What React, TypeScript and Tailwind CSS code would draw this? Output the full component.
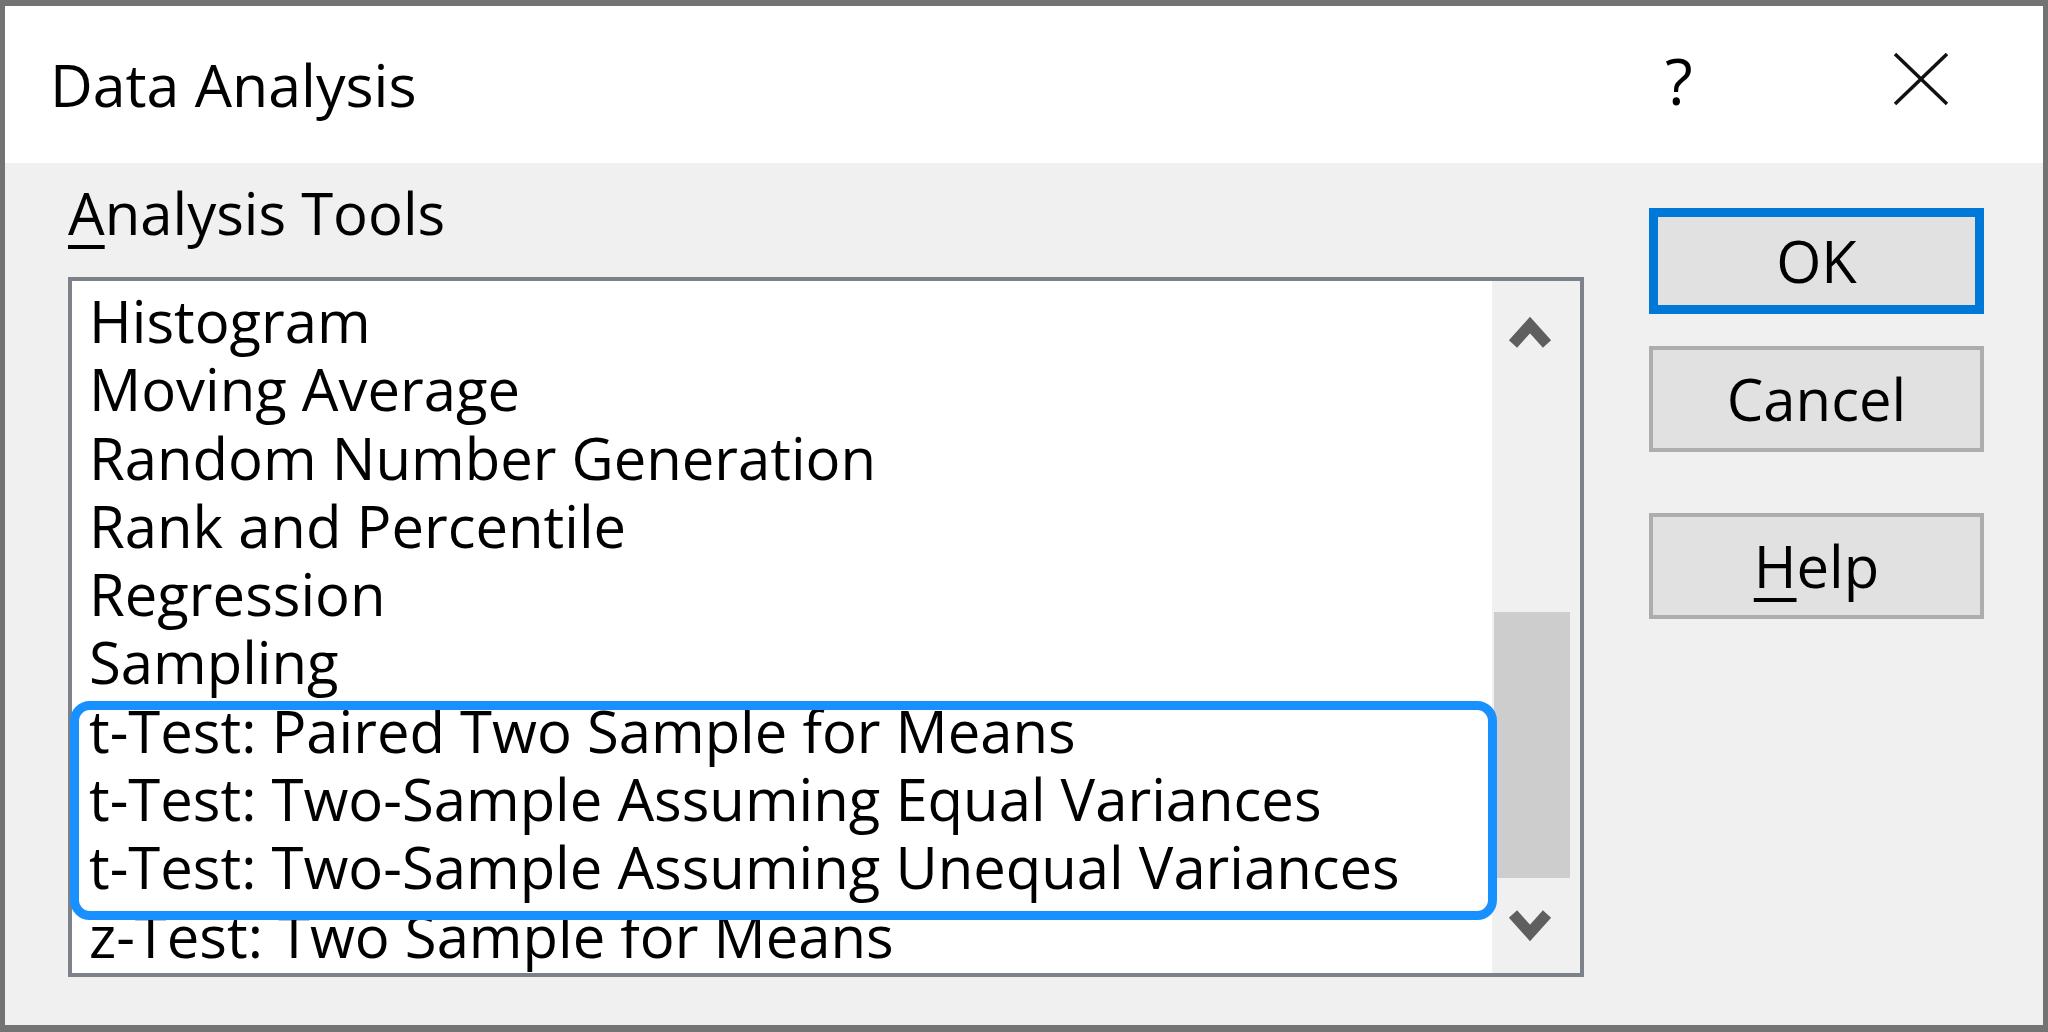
import React from "react";

const items = [
  "Histogram",
  "Moving Average",
  "Random Number Generation",
  "Rank and Percentile",
  "Regression",
  "Sampling",
  "t-Test: Paired Two Sample for Means",
  "t-Test: Two-Sample Assuming Equal Variances",
  "t-Test: Two-Sample Assuming Unequal Variances",
  "z-Test: Two Sample for Means",
];

function Chevron({ up }: { up: boolean }) {
  return (
    <svg width="44" height="38" viewBox="0 0 44 38">
      <polyline
        points={up ? "5,32 22,13 39,32" : "5,6 22,25 39,6"}
        fill="none"
        stroke="#5f5f5f"
        strokeWidth="11"
        strokeLinejoin="miter"
        strokeLinecap="butt"
      />
    </svg>
  );
}

export default function App() {
  return (
    <div className="relative w-[2048px] h-[1032px] bg-[#737373] pt-[6px] pl-[5px] pr-[5px] pb-[7px] font-['Open_Sans',sans-serif] text-black overflow-hidden">
      <div className="flex flex-col h-full bg-[#f0f0f0]">
        {/* Title bar */}
        <div className="h-[157px] bg-white flex items-start shrink-0">
          <div className="ml-[45px] pt-[44px] text-[59px] leading-[68px]">Data Analysis</div>
          <div className="flex-1" />
          <div className="pt-[40px] text-[64px] leading-[70px] w-[40px] mr-[188px]">?</div>
          <div className="pt-[46px] mr-[94px]">
            <svg width="56" height="54" viewBox="0 0 56 54">
              <line x1="2" y1="2" x2="54" y2="52" stroke="#111" strokeWidth="3.5" />
              <line x1="54" y1="2" x2="2" y2="52" stroke="#111" strokeWidth="3.5" />
            </svg>
          </div>
        </div>

        {/* Body */}
        <div className="flex flex-1 pl-[63px]">
          {/* Left column */}
          <div className="flex flex-col pt-[16px]">
            <div className="text-[58px] leading-[68px] h-[68px]">
              <span className="underline decoration-[4px] underline-offset-[10px]">A</span>nalysis Tools
            </div>
            <div className="mt-[30px] w-[1516px] h-[700px] border-[4px] border-[#7d828a] bg-white flex">
              <div className="flex-1 overflow-hidden pt-[6px] pl-[17px]">
                {items.map((t) => (
                  <div key={t} className="text-[58px] leading-[68.3px] h-[68.3px] whitespace-nowrap">
                    {t}
                  </div>
                ))}
              </div>
              <div className="w-[88px] bg-[#f0f0f0] flex flex-col shrink-0">
                <div className="h-[100px] flex items-center justify-center pr-[12px]">
                  <Chevron up={true} />
                </div>
                <div className="flex-1">
                  <div className="mt-[231px] ml-[2px] w-[76px] h-[266px] bg-[#cdcdcd]" />
                </div>
                <div className="h-[92px] flex items-center justify-center pr-[12px]">
                  <Chevron up={false} />
                </div>
              </div>
            </div>
          </div>

          {/* Right column: buttons */}
          <div className="flex flex-col ml-[65px] pt-[45px]">
            <div className="w-[335px] h-[106px] border-[9px] border-[#0078d7] bg-[#e1e1e1] flex items-center justify-center text-[58px] leading-[68px]">
              OK
            </div>
            <div className="mt-[32px] w-[335px] h-[106px] border-[4px] border-[#adadad] bg-[#e1e1e1] flex items-center justify-center text-[58px] leading-[68px]">
              Cancel
            </div>
            <div className="mt-[61px] w-[335px] h-[106px] border-[4px] border-[#adadad] bg-[#e1e1e1] flex items-center justify-center text-[58px] leading-[68px]">
              <span>
                <span className="underline decoration-[4px] underline-offset-[10px]">H</span>elp
              </span>
            </div>
          </div>
        </div>
      </div>

      {/* Blue annotation highlight */}
      <div className="absolute left-[70px] top-[701px] w-[1427px] h-[219px] border-[9px] border-[#1890ff] rounded-[20px]" />
    </div>
  );
}
